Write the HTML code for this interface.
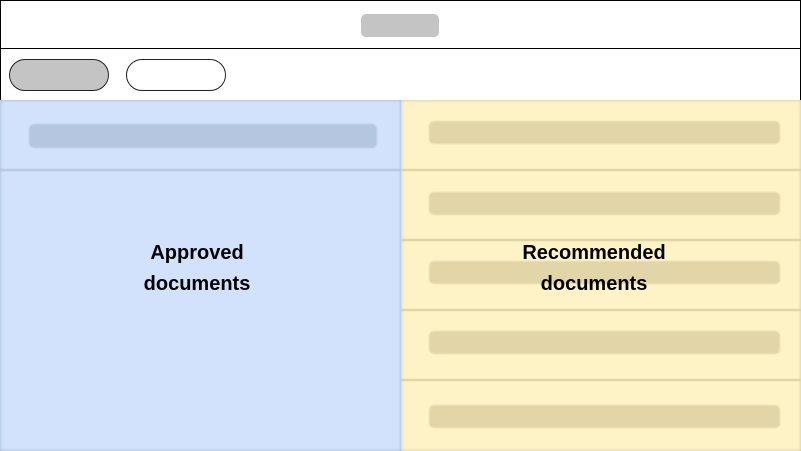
<!DOCTYPE html>
<html><head><style>
*{margin:0;padding:0;box-sizing:border-box}
body{width:801px;height:451px;background:#fff;position:relative;overflow:hidden;font-family:"Liberation Sans",sans-serif}
.a{position:absolute}
</style></head><body>
<div class="a" style="left:0;top:0;width:801px;height:451px;border:1px solid #000;border-bottom:none"></div>
<div class="a" style="left:361px;top:14px;width:78px;height:23px;background:#c4c4c4;border-radius:5px"></div>
<div class="a" style="left:0;top:48px;width:801px;height:1px;background:#000"></div>
<div class="a" style="left:9px;top:59px;width:100px;height:32px;background:#c4c4c4;border:1px solid #222;border-radius:16px"></div>
<div class="a" style="left:126px;top:59px;width:100px;height:32px;background:#fff;border:1px solid #222;border-radius:16px"></div>
<div class="a" style="left:0;top:100px;width:401px;height:351px;background:#d2e2fc;box-shadow:inset 0 0 3px #9fb0cc"></div>
<div class="a" style="left:0;top:169px;width:401px;height:2px;background:#b3c2da;filter:blur(0.6px)"></div>
<div class="a" style="left:29px;top:124px;width:348px;height:24px;background:#b5c6e0;border-radius:5px;filter:blur(0.8px)"></div>
<div class="a" style="left:401px;top:100px;width:400px;height:351px;background:#fef2c7;box-shadow:inset 0 0 3px #c9bd92"></div>
<div class="a" style="left:401px;top:169px;width:400px;height:2px;background:#d9cd9f;filter:blur(0.6px)"></div>
<div class="a" style="left:401px;top:239px;width:400px;height:2px;background:#d9cd9f;filter:blur(0.6px)"></div>
<div class="a" style="left:401px;top:309px;width:400px;height:2px;background:#d9cd9f;filter:blur(0.6px)"></div>
<div class="a" style="left:401px;top:379px;width:400px;height:2px;background:#d9cd9f;filter:blur(0.6px)"></div>
<div class="a" style="left:429px;top:121px;width:351px;height:23px;background:#e2d6a8;border-radius:5px;filter:blur(0.8px)"></div>
<div class="a" style="left:429px;top:192px;width:351px;height:23px;background:#e2d6a8;border-radius:5px;filter:blur(0.8px)"></div>
<div class="a" style="left:429px;top:261px;width:351px;height:23px;background:#e2d6a8;border-radius:5px;filter:blur(0.8px)"></div>
<div class="a" style="left:429px;top:331px;width:351px;height:23px;background:#e2d6a8;border-radius:5px;filter:blur(0.8px)"></div>
<div class="a" style="left:429px;top:405px;width:351px;height:23px;background:#e2d6a8;border-radius:5px;filter:blur(0.8px)"></div>
<div class="a" style="left:97px;top:238px;width:200px;text-align:center;font-weight:bold;font-size:20px;line-height:31px;color:#000">Approved<br>documents</div>
<div class="a" style="left:494px;top:238px;width:200px;text-align:center;font-weight:bold;font-size:20px;line-height:31px;color:#000">Recommended<br>documents</div>
</body></html>
